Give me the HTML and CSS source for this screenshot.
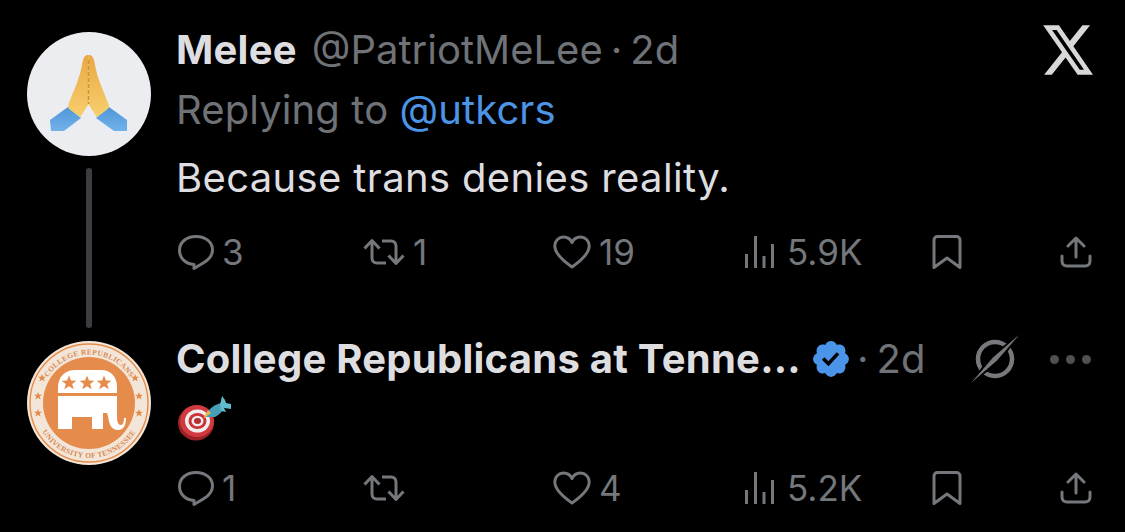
FILE: index.html
```html
<!DOCTYPE html>
<html lang="en">
<head>
<meta charset="utf-8">
<title>Thread</title>
<link rel="stylesheet" href="styles.css">
</head>
<body>
<svg class="defs" width="0" height="0" aria-hidden="true">
  <defs>
    <linearGradient id="sleeve" x1="0" y1="0" x2="0" y2="1"><stop offset="0" stop-color="#4f96d8"/><stop offset="1" stop-color="#72b2ea"/></linearGradient>
    <linearGradient id="hand" x1="0" y1="0" x2="0" y2="1"><stop offset="0" stop-color="#e9a843"/><stop offset="1" stop-color="#f7cf6e"/></linearGradient>
    <symbol id="i-reply" viewBox="0 0 36 36"><path d="M16 29.500C7.500 29 1.500 23 1.500 15.500 1.500 7.500 8 1.500 18 1.500s16.500 6 16.500 13.500c0 6-4.500 10-8.500 12.500L16 33.500z" fill="none" stroke="currentColor" stroke-width="3" stroke-linejoin="round"/></symbol>
    <symbol id="i-rt" viewBox="0 0 42 30"><path d="M9 4v17c0 3 2 5 5 5h9M33 26V9c0-3-2-5-5-5h-9M1.500 11.500 9 3.500l7.500 8M25.500 18.500l7.500 8 7.500-8" fill="none" stroke="currentColor" stroke-width="3" stroke-linejoin="round"/></symbol>
    <symbol id="i-heart" viewBox="0 0 38 34"><path d="M19 32C9 25 1.800 18.500 1.800 11 1.800 5.800 5.800 2 10.500 2 14.200 2 17.300 4 19 7.500 20.700 4 23.800 2 27.500 2c4.700 0 8.700 3.800 8.700 9C36.200 18.500 29 25 19 32z" fill="none" stroke="currentColor" stroke-width="3" stroke-linejoin="round"/></symbol>
    <symbol id="i-views" viewBox="0 0 30 32"><path d="M1.500 18v14M10.500 0v32M19 20v12M27.500 8v24" fill="none" stroke="currentColor" stroke-width="3"/></symbol>
    <symbol id="i-mark" viewBox="0 0 30 34"><path d="M2 32.500V5c0-2 1.500-3.500 3.500-3.500h19C26.500 1.500 28 3 28 5v27.500L15 23z" fill="none" stroke="currentColor" stroke-width="3" stroke-linejoin="round"/></symbol>
    <symbol id="i-share" viewBox="0 0 32 32"><path d="M16 21V2.500M8 10l8-8 8 8M2 20v5c0 3 2 5 5 5h18c3 0 5-2 5-5v-5" fill="none" stroke="currentColor" stroke-width="3" stroke-linecap="round" stroke-linejoin="round"/></symbol>
    <path id="arc-top" d="M13.500 62a48.500 48.500 0 0 1 97 0" />
    <path id="arc-bottom" d="M7 62a55 55 0 0 0 110 0" />
    <path id="star" d="M0-7.500 2 -2.400 7.400-2.200 3.200 1.100 4.700 6.300 0 3.300-4.700 6.300-3.200 1.100-7.400-2.200-2-2.400z"/>
  </defs>
</svg>
<main class="thread">
  <article class="tweet">
    <div class="side">
      <svg class="avatar" viewBox="0 0 124 124" role="img" aria-label="Praying hands avatar">
        <circle cx="62" cy="62" r="62" fill="#ecedf1"/>
        <path d="M23 88 41 75l13 11-17 13H24z" fill="url(#sleeve)"/>
        <path d="M100 88 82 75 69 86l18 13h13z" fill="url(#sleeve)"/>
        <path d="M61.500 23c-3-.5-5 2-6 7-2 15-9 29-14 42-1 3 0 5 2 6 3 2 6 5 10 7l8-13z" fill="url(#hand)"/>
        <path d="M61.500 23c3-.5 5 2 6 7 2 15 9 29 14 42 1 3 0 5-2 6-3 2-6 5-10 7l-8-13z" fill="url(#hand)"/>
        <path d="M61.500 28v44" stroke="#cf9238" stroke-width="1.500" stroke-dasharray="4 2"/>
      </svg>
      <div class="line"></div>
    </div>
    <div class="content">
      <div class="head">
        <div class="meta"><span class="name">Melee</span><span class="handle handle-id">@PatriotMeLee</span><span class="dot">·</span><span class="handle">2d</span></div>
        <svg class="x-logo" viewBox="1.200 2.200 21.600 19.600" preserveAspectRatio="none" role="img" aria-label="X"><path d="M18.244 2.250h3.308l-7.227 8.260 8.502 11.240H16.170l-5.214-6.817L4.990 21.750H1.680l7.730-8.835L1.254 2.250H8.080l4.713 6.231zm-1.161 17.520h1.833L7.084 4.126H5.117z"/></svg>
      </div>
      <p class="reply">Replying to <a class="link">@utkcrs</a></p>
      <p class="body">Because trans denies reality.</p>
      <div class="actions">
        <div class="act"><svg class="ic-reply"><use href="#i-reply"/></svg><span>3</span></div>
        <div class="act"><svg class="ic-rt"><use href="#i-rt"/></svg><span>1</span></div>
        <div class="act"><svg class="ic-heart"><use href="#i-heart"/></svg><span>19</span></div>
        <div class="act"><svg class="ic-views"><use href="#i-views"/></svg><span>5.9K</span></div>
        <div class="act"><svg class="ic-mark"><use href="#i-mark"/></svg></div>
        <div class="act"><svg class="ic-share"><use href="#i-share"/></svg></div>
      </div>
    </div>
  </article>
  <article class="tweet">
    <div class="side">
      <svg class="avatar" viewBox="0 0 124 124" role="img" aria-label="College Republicans seal">
        <circle cx="62" cy="62" r="62" fill="#f3e6d8"/>
        <circle cx="62" cy="62" r="59" fill="none" stroke="#e58c4c" stroke-width="1.400"/>
        <circle cx="62" cy="62" r="46" fill="#e58c4c"/>
        <text class="seal"><textPath href="#arc-top" startOffset="50%" text-anchor="middle">COLLEGE REPUBLICANS</textPath></text>
        <text class="seal"><textPath href="#arc-bottom" startOffset="50%" text-anchor="middle">UNIVERSITY OF TENNESSEE</textPath></text>
        <g fill="#e58c4c"><use href="#star" transform="translate(15 37) scale(.55)"/><use href="#star" transform="translate(11 55) scale(.55)"/><use href="#star" transform="translate(11 72) scale(.55)"/><use href="#star" transform="translate(108 37) scale(.55)"/><use href="#star" transform="translate(112 55) scale(.55)"/><use href="#star" transform="translate(112 72) scale(.55)"/></g>
        <path d="M31 52V46c0-10 7-17 17-17h26c10 0 16 7 16 17v6z" fill="#fff"/>
        <path d="M31 55h59v20c0 6 1 9 4 9 2 0 3-3 3-7h2c0 8-3 12-8 12-6 0-9-5-10-14l-1-3h-4v16H65V76H45v12H31z" fill="#fff"/>
        <g fill="#e58c4c"><use href="#star" transform="translate(42 42)"/><use href="#star" transform="translate(60 42)"/><use href="#star" transform="translate(77 42)"/></g>
      </svg>
    </div>
    <div class="content">
      <div class="head">
        <div class="meta">
          <span class="name">College Republicans at Tenne...</span>
          <svg class="badge" viewBox="1.700 1.700 20.600 20.600" role="img" aria-label="Verified"><path d="M22.250 12c0-1.430-.88-2.670-2.190-3.340.46-1.390.2-2.900-.81-3.910s-2.520-1.270-3.910-.81c-.66-1.310-1.910-2.190-3.340-2.190s-2.670.88-3.330 2.190c-1.400-.46-2.910-.2-3.920.81s-1.260 2.520-.8 3.910c-1.310.67-2.200 1.910-2.200 3.340s.89 2.670 2.200 3.340c-.46 1.390-.21 2.900.8 3.910s2.520 1.260 3.910.81c.67 1.310 1.910 2.190 3.340 2.190s2.680-.88 3.340-2.190c1.390.45 2.900.2 3.910-.81s1.270-2.520.81-3.910c1.310-.67 2.190-1.910 2.190-3.340zm-11.710 4.200L6.800 12.460l1.410-1.420 2.260 2.260 4.800-5.230 1.470 1.360-6.200 6.770z"/></svg>
          <span class="dot">·</span><span class="handle">2d</span>
        </div>
        <div class="tools">
          <svg class="grok" viewBox="0 0 48 48" role="img" aria-label="Grok"><circle cx="24" cy="24" r="17" fill="none" stroke="#77797d" stroke-width="4.500"/><path d="M48 0 29 28 0 48 19 20z" fill="#000"/><path d="M48 0 26 25.500 0 48 22 22.500z" fill="#77797d"/></svg>
          <div class="more"><i></i><i></i><i></i></div>
        </div>
      </div>
      <svg class="target" viewBox="0 0 60 50" role="img" aria-label="Direct hit emoji">
        <ellipse cx="20" cy="29" rx="18" ry="17.500" fill="#9c2227"/>
        <ellipse cx="21" cy="27" rx="17" ry="16" fill="#d13a3f"/>
        <ellipse cx="21.500" cy="27" rx="12.500" ry="11.500" fill="#f3eeee"/>
        <ellipse cx="21.500" cy="27" rx="9" ry="8" fill="#cb3338"/>
        <ellipse cx="21.500" cy="27" rx="6" ry="5.200" fill="#f3eeee"/>
        <ellipse cx="21.500" cy="27" rx="3.500" ry="3" fill="#b42f33"/>
        <path d="M29 23 34 15c3-3 7-5 11-6l3 5c-2 4-5 7-9 9z" fill="#45a0b8"/>
        <path d="M44 11 46 2l3 4 1 3 5 1 0 5-7-1 2 4-5-1z" fill="#62bccf"/>
        <path d="M27 25l5-9 3 3z" fill="#e9b64b"/>
      </svg>
      <div class="actions actions-low">
        <div class="act"><svg class="ic-reply"><use href="#i-reply"/></svg><span>1</span></div>
        <div class="act"><svg class="ic-rt"><use href="#i-rt"/></svg></div>
        <div class="act"><svg class="ic-heart"><use href="#i-heart"/></svg><span>4</span></div>
        <div class="act"><svg class="ic-views"><use href="#i-views"/></svg><span>5.2K</span></div>
        <div class="act"><svg class="ic-mark"><use href="#i-mark"/></svg></div>
        <div class="act"><svg class="ic-share"><use href="#i-share"/></svg></div>
      </div>
    </div>
  </article>
</main>
</body>
</html>
```
FILE: styles.css
```css
html, body {
  margin: 0;
  height: 532px;
  overflow: hidden;
  background: #000;
}
.defs { display: block; height: 0; }
.thread {
  padding: 28px 32px 0 27px;
  font-family: Inter, "Liberation Sans", sans-serif;
  font-size: 40px;
  color: #dedee0;
}
.tweet { display: flex; gap: 25px; }
.side {
  width: 124px;
  flex: none;
  display: flex;
  flex-direction: column;
  align-items: center;
}
.avatar { width: 124px; height: 124px; margin-top: 4px; display: block; }
.line {
  width: 6px;
  height: 160px;
  margin: 12px 0 9px;
  border-radius: 3px;
  background: #3c3d40;
}
.content { flex: 1; min-width: 0; }
.head {
  height: 44px;
  display: flex;
  align-items: center;
  justify-content: space-between;
}
.meta {
  display: flex;
  align-items: center;
  line-height: 44px;
  white-space: nowrap;
}
.name { font-weight: 700; letter-spacing: .25px; }
.handle { color: #6f7276; }
.handle-id { margin-left: 15px; }
.dot { color: #6f7276; margin: 0 8px; }
.x-logo { width: 50px; height: 50px; fill: #d8d8da; }
.reply, .body { margin: 0; line-height: 44px; }
.reply { margin-top: 16px; color: #6f7276; letter-spacing: .1px; }
.link { color: #4b94e6; }
.body { margin-top: 24px; letter-spacing: .35px; }
.actions {
  margin-top: 30px;
  height: 44px;
  display: grid;
  grid-template-columns: 184px 192px 192px 187px 127px auto;
  align-items: center;
  color: #74777b;
  font-size: 35px;
}
.actions-low { margin-top: 22px; }
.act { display: flex; align-items: center; gap: 8px; }
.act svg { display: block; flex: none; }
.ic-reply { width: 36px; height: 36px; margin-top: 2px; margin-left: 2px; }
.ic-rt { width: 42px; height: 30px; margin-left: 3px; }
.ic-heart { width: 38px; height: 34px; margin-left: 1px; }
.ic-views { width: 30px; height: 32px; margin: 0 4px 0 1px; }
.ic-mark { width: 30px; height: 34px; margin-left: 1px; }
.ic-share { width: 32px; height: 32px; margin-left: 2px; }
.tools { display: flex; align-items: center; gap: 31px; margin-right: 2px; }
.grok { width: 48px; height: 48px; }
.more { display: flex; gap: 7px; }
.more i { width: 9px; height: 9px; border-radius: 50%; background: #4f5052; }
.badge { width: 36px; height: 36px; fill: #4a94ea; flex: none; margin-left: 12px; }
.target { display: block; width: 60px; height: 50px; margin-top: 13px; }
.seal {
  font-family: "Liberation Serif", serif;
  font-size: 7.500px;
  font-weight: 700;
  letter-spacing: .3px;
  fill: #d98a55;
}
```
